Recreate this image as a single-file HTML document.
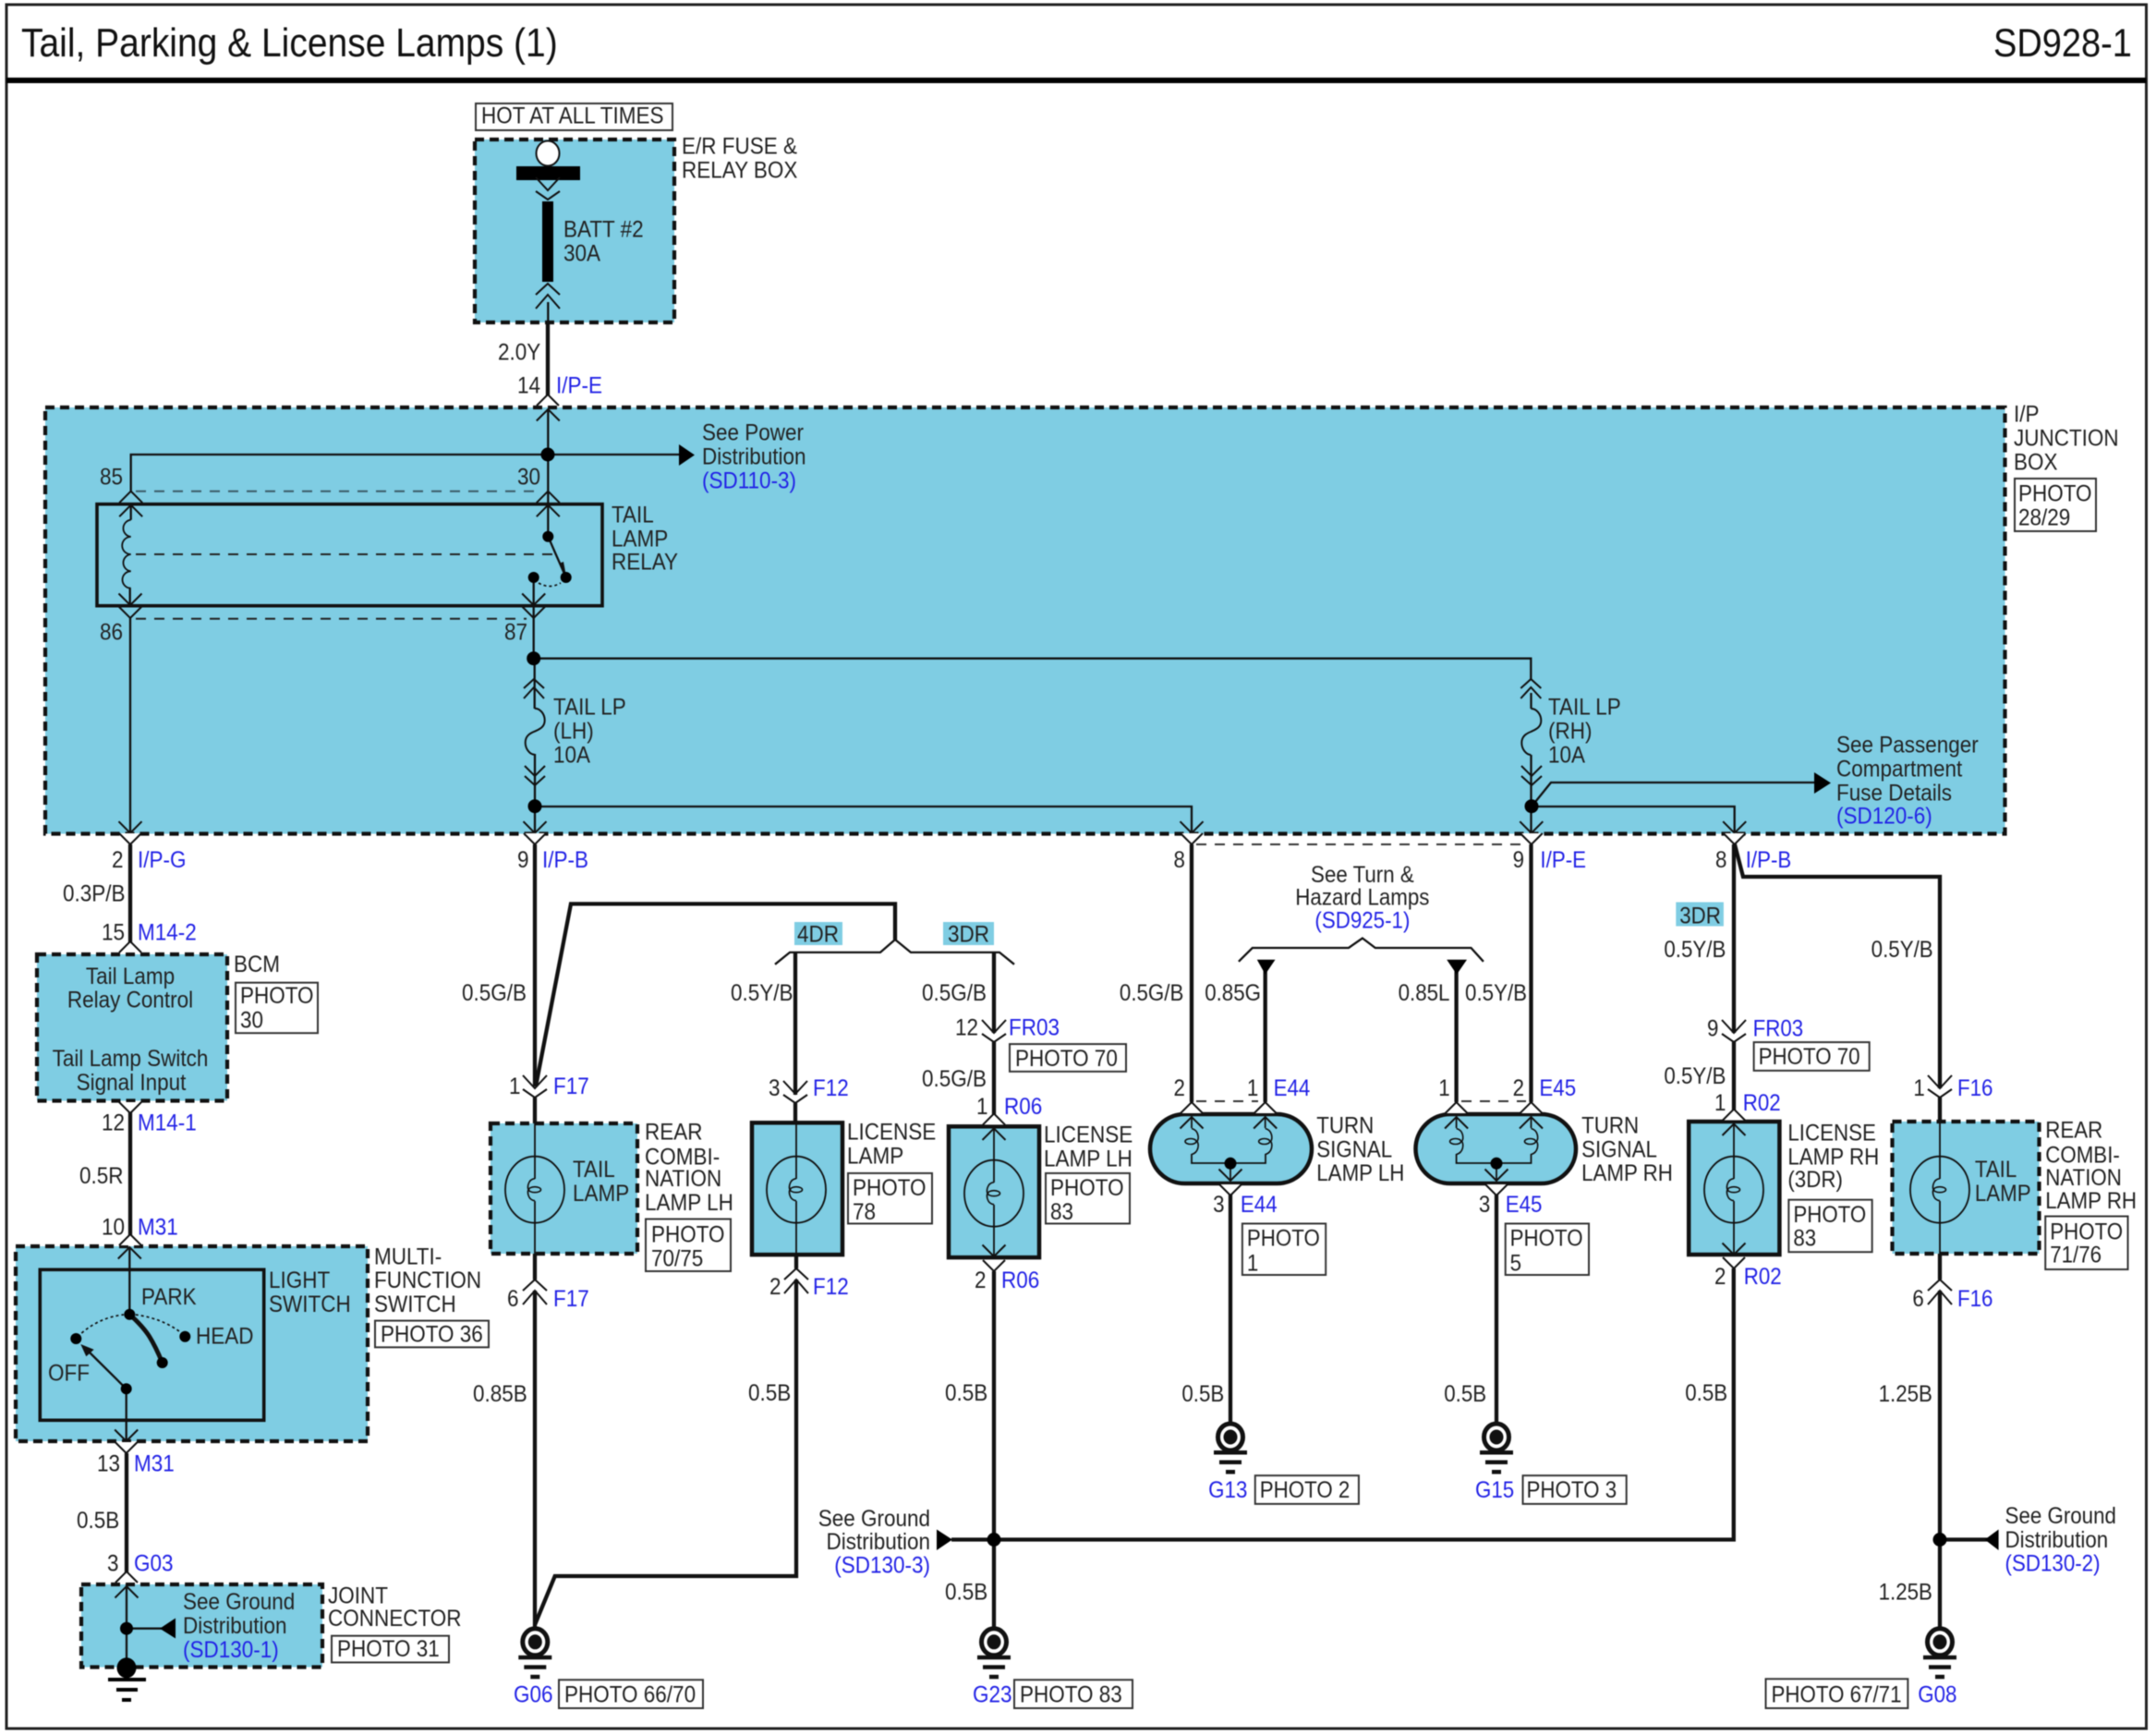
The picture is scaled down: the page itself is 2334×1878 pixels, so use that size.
<!DOCTYPE html>
<html><head><meta charset="utf-8"><title>Tail, Parking &amp; License Lamps (1)</title>
<style>
html,body{margin:0;padding:0;background:#fff}
svg{display:block;filter:blur(.5px)}
text{font:22.5px "Liberation Sans",Arial,sans-serif;fill:#222;transform-box:fill-box;transform-origin:0 100%;transform:scaleY(1.12)}
text.b{fill:#2222e6}
text.t{font-size:39px;fill:#111}
text.m{text-anchor:middle}
text.e{text-anchor:end}
</style></head><body>
<svg xmlns="http://www.w3.org/2000/svg" width="2334" height="1878" viewBox="0 0 2334 1878">
<defs>
<g id="dd" fill="none" stroke="#111" stroke-width="2"><path d="M-13 -24L0 -10L13 -24M-13 -9L0 0L13 -9"/></g>
<g id="du" fill="none" stroke="#111" stroke-width="2"><path d="M-13 12L0 0L13 12M-13 27L0 12L13 27"/></g>
<g id="dd2" fill="none" stroke="#111" stroke-width="2"><path d="M-11 -21L0 -10L11 -21M-11 -10L0 0L11 -10"/></g>
<g id="du2" fill="none" stroke="#111" stroke-width="2"><path d="M-11 10L0 0L11 10M-11 21L0 9L11 21"/></g>
<g id="cd" fill="none" stroke="#111" stroke-width="2"><path d="M-12.500 -12.500L0 0L12.500 -12.500"/></g>
<g id="cu" fill="none" stroke="#111" stroke-width="2"><path d="M-12.500 12.500L0 0L12.500 12.500"/></g>
<g id="td" fill="#fff" stroke="#111" stroke-width="2"><path d="M-12 -12L0 0L12 -12"/></g>
<g id="tu" fill="#fff" stroke="#111" stroke-width="2"><path d="M-12 12L0 0L12 12"/></g>
<g id="fl" fill="none" stroke="#111" stroke-width="1.600"><path d="M0 -12C-8 -11 -8 -2 -7 0C-8 2 -8 11 0 12"/><ellipse rx="6.500" ry="3"/></g>
<g id="fc" fill="none" stroke="#111" stroke-width="1.600"><path d="M0 -14C8 -12 8 -3 6 0C8 3 8 12 0 14"/><ellipse cx="-1" rx="6" ry="3"/></g>
<ellipse id="lamp" rx="32" ry="36" fill="none" stroke="#111" stroke-width="1.800"/>
<g id="gnd"><ellipse rx="13.500" ry="14.500" fill="#fff" stroke="#111" stroke-width="5"/><ellipse rx="7.500" ry="8" fill="#111"/><rect x="-18" y="14.500" width="36" height="4.500" fill="#111"/><rect x="-12" y="25" width="24" height="4.500" fill="#111"/><rect x="-5" y="35.500" width="10" height="4.500" fill="#111"/></g>
<path id="wave" fill="none" stroke="#111" stroke-width="2" d="M0 0C6 0 11 6 11 13C11 21 4 23 0 25C-5 27 -10 30 -10 37C-10 44 -5 50 0 50"/>
</defs>

<rect x="7" y="5" width="2316.500" height="1866" fill="#fff" stroke="#222" stroke-width="3"/>
<rect x="7" y="84" width="2316.500" height="6" fill="#000"/>
<text class="t" x="23" y="62">Tail, Parking &amp; License Lamps (1)</text>
<text class="t" style="font-size:38px" x="2158" y="62">SD928-1</text>

<!-- blue modules -->
<g fill="#7fcde3" stroke="#111" stroke-width="4.200" stroke-dasharray="10 6">
<rect x="514" y="151" width="216" height="198"/>
<rect x="49" y="441" width="2121.500" height="461.500"/>
<rect x="40" y="1033" width="206" height="158.500"/>
<rect x="17" y="1349" width="381" height="211"/>
<rect x="88" y="1715" width="261" height="89.500"/>
<rect x="531" y="1216" width="159" height="141"/>
<rect x="2048.500" y="1214" width="159" height="143"/>
</g>
<g fill="#7fcde3" stroke="#111" stroke-width="4.500">
<rect x="814" y="1215.300" width="98" height="142.800"/>
<rect x="1027" y="1219.300" width="98" height="141.800"/>
<rect x="1828.200" y="1214" width="98.200" height="144"/>
<rect x="1245" y="1206" width="175" height="75" rx="37.500"/>
<rect x="1532.500" y="1206" width="173.500" height="75" rx="37.500"/>
</g>
<g fill="#7fcde3">
<rect x="860" y="998" width="52" height="25"/><rect x="1021" y="998" width="55" height="25"/><rect x="1814.300" y="976.500" width="51.600" height="26"/>
</g>
<g fill="none" stroke="#111" stroke-width="3.600">
<rect x="105" y="545.700" width="547" height="110"/>
<rect x="43.300" y="1374.300" width="242.400" height="163"/>
</g>

<!-- upper photo boxes -->
<g fill="#fff" stroke="#333" stroke-width="2">
<rect x="515" y="112" width="213" height="29"/>
<rect x="2181" y="518" width="88" height="57"/>
</g>

<!-- thick wires -->
<g fill="none" stroke="#111" stroke-width="4.300" stroke-linejoin="miter">
<path d="M593 349V428"/>
<path d="M141 914V1020M141 1204V1337"/>
<path d="M137 1573V1702"/>
<path d="M579 914V1176M579 1188V1216M579 1357V1385M579 1397V1762"/>
<path d="M969 1017V978.400H618L580 1176"/>
<path d="M861 1031V1185M861 1194V1215"/>
<path d="M862 1358V1373M862 1385V1706H600.700L579.300 1758"/>
<path d="M1076 1031V1118M1076 1128V1206M1076 1376V1765"/>
<path d="M1030 1666.500H1876.800V1373"/>
<path d="M1290 914V1193M1369.700 1048.800V1193M1576.600 1048.800V1193M1657.500 914V1193"/>
<path d="M1332 1293V1545M1620 1293V1545"/>
<path d="M1877 914V1118M1877 1128V1201"/>
<path d="M1877.700 913L1887 949H2100V1178M2100 1188V1214M2100 1357V1385M2100 1397V1765"/>
<path d="M2100 1666.500H2153"/>
</g>
<!-- thin wires -->
<g fill="none" stroke="#111" stroke-width="2.300">
<path d="M593.300 327V349M593.300 443V580.700"/>
<path d="M141.700 531.700V492H738"/>
<path d="M141 669V902"/>
<path d="M577.700 625V712.700H1657.300V735M578.700 712.700V767M579 816V902"/>
<path d="M579 873H1290V901M1658 873H1877.700V901M1657.500 817V901"/>
<path d="M1657.500 750V767"/>
<path d="M1658 873L1679 847H1968"/>
<path d="M839 1043.800L855 1030.900H953L969 1017L986 1030.900H1082L1098 1043.800"/>
<path d="M1340.900 1040.800L1355.800 1026H1460L1474.900 1015.500L1488.800 1026H1592.500L1605.900 1040.800"/>
<path d="M140.300 1350V1422.700M136.700 1503.300V1560M137 1715V1805M137 1762.700H176"/>
<path d="M593.300 580.700L612.700 625"/>
<path d="M136.700 1503.300L92 1459"/>
<path d="M141.700 547V562.700M140.700 636.700V655"/>
</g>
<g fill="none" stroke="#111" stroke-width="1.800">
<path d="M141.700 562.700a9.200 9.200 0 0 0 0 18.300a9.200 9.200 0 0 0 0 19a9.200 9.200 0 0 0 0 18.300a9.200 9.200 0 0 0 0 18.400"/>
<path d="M579 1216V1276M579 1300V1357M862 1215V1276M862 1300V1358M1076 1220V1280M1076 1304V1361M1877 1214V1276M1877 1300V1358M2100 1214V1276M2100 1300V1357"/>
<path d="M1290 1209V1221M1369.700 1209V1221M1576.600 1209V1221M1657.500 1209V1221"/>
<path d="M1290 1249V1259H1370V1249M1576.600 1249V1259H1657.500V1249"/>
<path d="M1332 1259V1278M1620 1259V1278"/>
</g>
<g fill="#111"><path d="M87.300 1455L101.700 1460.700L93.300 1468.300Z"/><path d="M612.500 621L605 610L610 608Z"/></g>
<g fill="none" stroke="#111" stroke-width="4.800" stroke-linecap="round"><path d="M140.300 1422.700Q155 1436 161.700 1446.700T175.700 1475"/></g>
<g fill="none" stroke="#111" stroke-width="1.700" stroke-dasharray="3 3"><path d="M88.300 1443Q108 1426 134 1423M146.700 1423Q175 1427 195 1441.700"/><path d="M583 631Q595 638 607 631"/></g>
<!-- dashed linkages -->
<g fill="none" stroke-width="2" stroke-dasharray="11 9">
<path stroke="#3a5a66" d="M147 531.700H585"/>
<path stroke="#222" d="M147 600H601M147 669.700H570"/>
<path stroke="#333" d="M1295 914H1652M1295 1192H1362M1582 1192H1652"/>
</g>

<!-- battery/fuse -->
<rect x="559" y="180" width="69" height="15" fill="#000"/>
<rect x="587" y="218" width="12" height="87" fill="#000"/>
<ellipse cx="593" cy="166" rx="12.500" ry="13.500" fill="#fff" stroke="#111" stroke-width="2"/>

<!-- connectors -->
<use href="#dd" x="593" y="216"/><use href="#du" x="593" y="307"/>
<use href="#tu" x="593" y="427"/><use href="#cu" x="593.300" y="443"/>
<use href="#cu" x="141.700" y="531.700"/><use href="#cu" x="593.300" y="531.700"/>
<use href="#cu" x="141.700" y="546.700"/><use href="#cu" x="593.300" y="546.700"/>
<use href="#cd" x="141" y="655"/><use href="#cd" x="577.700" y="655"/>
<use href="#cd" x="141" y="669"/><use href="#cd" x="577.700" y="669"/>
<use href="#du2" x="578" y="735"/><use href="#dd2" x="579" y="850"/>
<use href="#du2" x="1657.300" y="735"/><use href="#dd2" x="1658" y="850"/>
<use href="#wave" x="578.700" y="766.700"/><use href="#wave" x="1657.300" y="767"/>
<use href="#cd" x="141" y="901.700"/><use href="#cd" x="579" y="901.700"/><use href="#cd" x="1290" y="901.700"/><use href="#cd" x="1657.800" y="901.700"/><use href="#cd" x="1877.700" y="901.700"/>
<use href="#td" x="141" y="914"/><use href="#td" x="579" y="914"/><use href="#td" x="1290" y="914"/><use href="#td" x="1657.800" y="914"/><use href="#td" x="1877.700" y="914"/>
<use href="#tu" x="141" y="1019"/><use href="#td" x="141" y="1205"/>
<use href="#tu" x="141" y="1336"/><use href="#cu" x="140.300" y="1350"/>
<use href="#cd" x="136.700" y="1560"/><use href="#td" x="136.700" y="1573"/>
<use href="#tu" x="137" y="1701"/><use href="#cu" x="137" y="1717"/>
<use href="#dd" x="579" y="1188"/><use href="#du" x="579" y="1385"/>
<use href="#dd" x="861" y="1194"/><use href="#du" x="862" y="1373"/>
<use href="#dd" x="1076" y="1128"/><use href="#tu" x="1076" y="1205.400"/><use href="#cu" x="1076" y="1221.400"/><use href="#cd" x="1076" y="1360"/><use href="#td" x="1076" y="1376"/>
<use href="#tu" x="1290" y="1193"/><use href="#tu" x="1369.700" y="1193"/><use href="#tu" x="1576.600" y="1193"/><use href="#tu" x="1657.500" y="1193"/>
<use href="#cu" x="1290" y="1209"/><use href="#cu" x="1369.700" y="1209"/><use href="#cu" x="1576.600" y="1209"/><use href="#cu" x="1657.500" y="1209"/>
<use href="#cd" x="1332" y="1278"/><use href="#cd" x="1620" y="1278"/>
<use href="#td" x="1332" y="1294"/><use href="#td" x="1620" y="1294"/>
<use href="#dd" x="1877" y="1128"/><use href="#tu" x="1877" y="1200.500"/><use href="#cu" x="1877" y="1216.500"/><use href="#cd" x="1877" y="1358"/><use href="#td" x="1877" y="1373"/>
<use href="#dd" x="2100" y="1188"/><use href="#du" x="2100" y="1385"/>

<!-- lamps -->
<use href="#lamp" x="579" y="1287.700"/><use href="#fl" x="579" y="1287.700"/>
<use href="#lamp" x="862" y="1287.700"/><use href="#fl" x="862" y="1287.700"/>
<use href="#lamp" x="1076" y="1291.700"/><use href="#fl" x="1076" y="1291.700"/>
<use href="#lamp" x="1877" y="1287.700"/><use href="#fl" x="1877" y="1287.700"/>
<use href="#lamp" x="2100" y="1287.700"/><use href="#fl" x="2100" y="1287.700"/>
<use href="#fc" x="1290" y="1235.500"/><use href="#fc" x="1369.700" y="1235.500"/><use href="#fc" x="1576.600" y="1235.500"/><use href="#fc" x="1657.500" y="1235.500"/>

<!-- dots and arrows -->
<g fill="#000">
<circle cx="593" cy="492" r="7.500"/><circle cx="593.300" cy="580.700" r="6"/><circle cx="612.700" cy="625" r="6"/><circle cx="577.700" cy="625" r="6"/>
<circle cx="577.700" cy="712.700" r="7.500"/><circle cx="579" cy="872.700" r="7.500"/><circle cx="1658" cy="872.700" r="7.500"/>
<circle cx="140.300" cy="1422.700" r="6"/><circle cx="175.700" cy="1475" r="6"/><circle cx="82.300" cy="1449" r="6"/><circle cx="200.300" cy="1446.700" r="6"/><circle cx="136.700" cy="1503.300" r="6"/>
<circle cx="137" cy="1762.700" r="7"/><ellipse cx="137" cy="1805.300" rx="10.500" ry="11"/>
<rect x="117" y="1816" width="41" height="4"/><rect x="126" y="1827" width="23" height="4"/><rect x="132" y="1838" width="10" height="4"/>
<circle cx="1076" cy="1666.500" r="7.500"/><circle cx="2100" cy="1666.500" r="7.500"/>
<circle cx="1332" cy="1259.300" r="6.500"/><circle cx="1620" cy="1259.300" r="6.500"/>
<path d="M735 481L752 492.500L735 504Z"/>
<path d="M1964 836L1982 847.500L1964 859Z"/>
<path d="M190 1751.500L173 1762.700L190 1773.500Z"/>
<path d="M1014 1655.500L1031 1666.500L1014 1678Z"/>
<path d="M2163.600 1655.500L2148.700 1666.500L2163.600 1678Z"/>
<path d="M1360.800 1038.800H1380.500L1369.700 1054.700Z"/>
<path d="M1566.200 1038.800H1588L1577 1054.700Z"/>
</g>

<use href="#gnd" x="579.300" y="1777.300"/><use href="#gnd" x="1076" y="1777.300"/><use href="#gnd" x="2100" y="1777.300"/><use href="#gnd" x="1332" y="1555.500"/><use href="#gnd" x="1620" y="1555.500"/>

<!-- upper text -->
<text x="521" y="134">HOT AT ALL TIMES</text>
<text x="738" y="167">E/R FUSE &amp;</text><text x="738" y="193">RELAY BOX</text>
<text x="610" y="257">BATT #2</text><text x="610" y="283">30A</text>
<text x="539" y="390">2.0Y</text><text x="560" y="426">14</text><text class="b" x="602" y="426">I/P-E</text>
<text x="760" y="477">See Power</text><text x="760" y="503">Distribution</text><text class="b" x="760" y="529">(SD110-3)</text>
<text x="108" y="525">85</text><text x="560" y="525">30</text><text x="108" y="693">86</text><text x="546" y="693">87</text>
<text x="662" y="566">TAIL</text><text x="662" y="592">LAMP</text><text x="662" y="617">RELAY</text>
<text x="599" y="774">TAIL LP</text><text x="599" y="800">(LH)</text><text x="599" y="826">10A</text>
<text x="1676" y="774">TAIL LP</text><text x="1676" y="800">(RH)</text><text x="1676" y="826">10A</text>
<text x="1988" y="815">See Passenger</text><text x="1988" y="841">Compartment</text><text x="1988" y="867">Fuse Details</text><text class="b" x="1988" y="892">(SD120-6)</text>
<text x="2180" y="457">I/P</text><text x="2180" y="483">JUNCTION</text><text x="2180" y="509">BOX</text><text x="2185" y="543">PHOTO</text><text x="2185" y="569">28/29</text>

<!-- lower text and photo boxes -->
<g transform="translate(0 8.600) scale(1 .9916)">
<g fill="#fff" stroke="#333" stroke-width="2">
<rect x="255" y="1064" width="89" height="55"/>
<rect x="406" y="1433" width="123" height="29"/>
<rect x="359" y="1777" width="127" height="29"/>
<rect x="699" y="1322" width="92" height="57"/>
<rect x="918" y="1272" width="91" height="55"/>
<rect x="1093" y="1131" width="126" height="30"/>
<rect x="1132" y="1272" width="91" height="55"/>
<rect x="605" y="1825" width="156" height="31"/>
<rect x="1098" y="1825" width="128" height="31"/>
</g>
<text x="121" y="939">2</text><text class="b" x="149" y="939">I/P-G</text>
<text x="68" y="976">0.3P/B</text>
<text x="110" y="1018">15</text><text class="b" x="149" y="1018">M14-2</text>
<text class="m" x="141" y="1066">Tail Lamp</text><text class="m" x="141" y="1092">Relay Control</text>
<text class="m" x="141" y="1156">Tail Lamp Switch</text><text class="m" x="142" y="1182">Signal Input</text>
<text x="253" y="1053">BCM</text><text x="260" y="1087">PHOTO</text><text x="260" y="1114">30</text>
<text x="110" y="1226">12</text><text class="b" x="149" y="1226">M14-1</text>
<text x="86" y="1284">0.5R</text>
<text x="110" y="1340">10</text><text class="b" x="149" y="1340">M31</text>
<text x="291" y="1398">LIGHT</text><text x="291" y="1424">SWITCH</text>
<text x="153" y="1416">PARK</text><text x="212" y="1459">HEAD</text><text x="52" y="1499">OFF</text>
<text x="405" y="1372">MULTI-</text><text x="405" y="1398">FUNCTION</text><text x="405" y="1424">SWITCH</text><text x="412" y="1457">PHOTO 36</text>
<text x="105" y="1598">13</text><text class="b" x="145" y="1598">M31</text>
<text x="83" y="1660">0.5B</text>
<text x="116" y="1707">3</text><text class="b" x="145" y="1707">G03</text>
<text x="198" y="1749">See Ground</text><text x="198" y="1775">Distribution</text><text class="b" x="198" y="1801">(SD130-1)</text>
<text x="355" y="1742">JOINT</text><text x="355" y="1767">CONNECTOR</text><text x="365" y="1800">PHOTO 31</text>

<text x="560" y="939">9</text><text class="b" x="587" y="939">I/P-B</text>
<text x="500" y="1084">0.5G/B</text>
<text x="551" y="1186">1</text><text class="b" x="599" y="1186">F17</text>
<text x="620" y="1277">TAIL</text><text x="620" y="1303">LAMP</text>
<text x="698" y="1236">REAR</text><text x="698" y="1263">COMBI-</text><text x="698" y="1287">NATION</text><text x="698" y="1313">LAMP LH</text>
<text x="705" y="1348">PHOTO</text><text x="705" y="1374">70/75</text>
<text x="549" y="1418">6</text><text class="b" x="599" y="1418">F17</text>
<text x="512" y="1522">0.85B</text>
<text class="b" x="556" y="1850">G06</text><text x="611" y="1850">PHOTO 66/70</text>

<text x="863" y="1020">4DR</text><text x="1026" y="1020">3DR</text>
<text x="791" y="1084">0.5Y/B</text><text x="998" y="1084">0.5G/B</text>
<text x="1034" y="1122">12</text><text class="b" x="1092" y="1122">FR03</text><text x="1099" y="1156">PHOTO 70</text>
<text x="998" y="1178">0.5G/B</text>
<text x="832" y="1188">3</text><text class="b" x="880" y="1188">F12</text>
<text x="1057" y="1208">1</text><text class="b" x="1087" y="1208">R06</text>
<text x="917" y="1236">LICENSE</text><text x="917" y="1262">LAMP</text><text x="923" y="1297">PHOTO</text><text x="923" y="1323">78</text>
<text x="1130" y="1239">LICENSE</text><text x="1130" y="1265">LAMP LH</text><text x="1137" y="1297">PHOTO</text><text x="1137" y="1323">83</text>
<text x="1055" y="1398">2</text><text class="b" x="1084" y="1398">R06</text>
<text x="833" y="1405">2</text><text class="b" x="880" y="1405">F12</text>
<text x="810" y="1521">0.5B</text><text x="1023" y="1521">0.5B</text>
<text class="e" x="1007" y="1658">See Ground</text><text class="e" x="1007" y="1683">Distribution</text><text class="b e" x="1007" y="1709">(SD130-3)</text>
<text x="1023" y="1738">0.5B</text>
<text class="b" x="1053" y="1850">G23</text><text x="1104" y="1850">PHOTO 83</text>

<!-- right portion -->
<g transform="translate(9.120 0) scale(.9924 1)">
<g fill="#fff" stroke="#333" stroke-width="2">
<rect x="1346" y="1327" width="91" height="56"/>
<rect x="1633" y="1327" width="91" height="56"/>
<rect x="1360" y="1602" width="113" height="31"/>
<rect x="1652" y="1602" width="113" height="31"/>
<rect x="1904" y="1129" width="126" height="31"/>
<rect x="1942" y="1301" width="91" height="57"/>
<rect x="2222" y="1319" width="90" height="58"/>
<rect x="1917" y="1824" width="155" height="32"/>
</g>
<text x="1271" y="939">8</text><text x="1641" y="939">9</text><text class="b" x="1671" y="939">I/P-E</text><text x="1862" y="939">8</text><text class="b" x="1895" y="939">I/P-B</text>
<text class="m" x="1477" y="955">See Turn &amp;</text><text class="m" x="1477" y="980">Hazard Lamps</text><text class="b m" x="1477" y="1005">(SD925-1)</text>
<text x="1212" y="1084">0.5G/B</text><text x="1305" y="1084">0.85G</text><text x="1516" y="1084">0.85L</text><text x="1589" y="1084">0.5Y/B</text>
<text x="1271" y="1188">2</text><text x="1351" y="1188">1</text><text class="b" x="1380" y="1188">E44</text>
<text x="1560" y="1188">1</text><text x="1641" y="1188">2</text><text class="b" x="1670" y="1188">E45</text>
<text x="1427" y="1229">TURN</text><text x="1427" y="1255">SIGNAL</text><text x="1427" y="1281">LAMP LH</text>
<text x="1716" y="1229">TURN</text><text x="1716" y="1255">SIGNAL</text><text x="1716" y="1281">LAMP RH</text>
<text x="1314" y="1315">3</text><text class="b" x="1344" y="1315">E44</text><text x="1604" y="1315">3</text><text class="b" x="1633" y="1315">E45</text>
<text x="1351" y="1352">PHOTO</text><text x="1351" y="1379">1</text><text x="1638" y="1352">PHOTO</text><text x="1638" y="1379">5</text>
<text x="1280" y="1522">0.5B</text><text x="1566" y="1522">0.5B</text>
<text class="b" x="1309" y="1627">G13</text><text x="1365" y="1627">PHOTO 2</text>
<text class="b" x="1600" y="1627">G15</text><text x="1656" y="1627">PHOTO 3</text>
<text x="1823" y="1000">3DR</text>
<text x="1806" y="1037">0.5Y/B</text><text x="2032" y="1037">0.5Y/B</text>
<text x="1853" y="1123">9</text><text class="b" x="1903" y="1123">FR03</text><text x="1909" y="1154">PHOTO 70</text>
<text x="1806" y="1175">0.5Y/B</text>
<text x="1861" y="1204">1</text><text class="b" x="1892" y="1204">R02</text>
<text x="1941" y="1237">LICENSE</text><text x="1941" y="1263">LAMP RH</text><text x="1941" y="1288">(3DR)</text>
<text x="1947" y="1326">PHOTO</text><text x="1947" y="1352">83</text>
<text x="1861" y="1394">2</text><text class="b" x="1893" y="1394">R02</text>
<text x="1829" y="1521">0.5B</text>
<text x="2078" y="1188">1</text><text class="b" x="2126" y="1188">F16</text>
<text x="2145" y="1277">TAIL</text><text x="2145" y="1303">LAMP</text>
<text x="2222" y="1234">REAR</text><text x="2222" y="1261">COMBI-</text><text x="2222" y="1286">NATION</text><text x="2222" y="1311">LAMP RH</text>
<text x="2227" y="1345">PHOTO</text><text x="2227" y="1370">71/76</text>
<text x="2077" y="1418">6</text><text class="b" x="2126" y="1418">F16</text>
<text x="2040" y="1522">1.25B</text><text x="2040" y="1738">1.25B</text>
<text x="2178" y="1655">See Ground</text><text x="2178" y="1681">Distribution</text><text class="b" x="2178" y="1707">(SD130-2)</text>
<text x="1923" y="1850">PHOTO 67/71</text><text class="b" x="2083" y="1850">G08</text>
</g>
</g>
</svg>
</body></html>
